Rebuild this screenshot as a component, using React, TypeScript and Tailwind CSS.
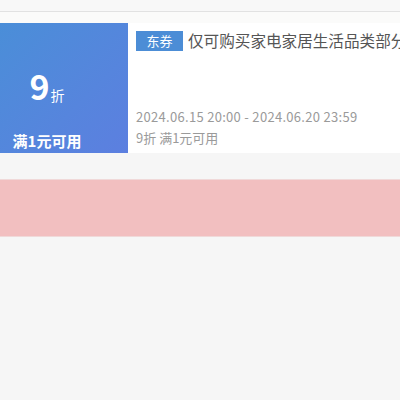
export default function App() {
  const font = { fontFamily: '"Noto Sans CJK SC", "Liberation Sans", sans-serif' };
  return (
    <div className="h-[400px] w-[400px] overflow-hidden bg-[#f6f6f6]" style={font}>
      <div className="h-[12px] border-b border-[#e2e2e2] bg-[#f8f8f8]" />
      <div className="h-[11px] bg-[#fbfbfa]" />
      {/* Coupon card */}
      <div className="flex h-[130px] bg-white">
        <div className="flex w-[128px] shrink-0 flex-col items-center bg-gradient-to-br from-[#4a8ed8] to-[#5c7fe0] pr-[34px] text-white">
          <div className="mt-[46px] flex items-end">
            <span className="text-[34px] font-bold leading-none">9</span>
            <span className="mb-[1px] ml-[1px] text-[14px] leading-none">折</span>
          </div>
          <div className="mt-auto mb-[1px] whitespace-nowrap text-[15px] font-bold leading-[22px]">满1元可用</div>
        </div>
        <div className="flex min-w-0 flex-1 flex-col overflow-hidden pl-[8px] pt-[6px]">
          <div className="flex items-center whitespace-nowrap">
            <span className="flex h-[20px] w-[47px] shrink-0 items-center justify-center bg-[#4c8dd6] text-[13px] text-white">
              东券
            </span>
            <span className="ml-[5px] text-[15.6px] text-[#555]">仅可购买家电家居生活品类部分商品</span>
          </div>
          <div className="mt-auto whitespace-nowrap text-[13px] leading-[20px] tracking-[0.3px] text-[#9a9a9a]">
            2024.06.15 20:00 - 2024.06.20 23:59
          </div>
          <div className="mb-[5px] mt-[1px] text-[13px] leading-[20px] text-[#9a9a9a]">9折 满1元可用</div>
        </div>
      </div>
      <div className="h-[26px]" />
      <div className="h-[58px] border-y border-[#f0d9d9] bg-[#f2bfc0]" />
    </div>
  );
}
